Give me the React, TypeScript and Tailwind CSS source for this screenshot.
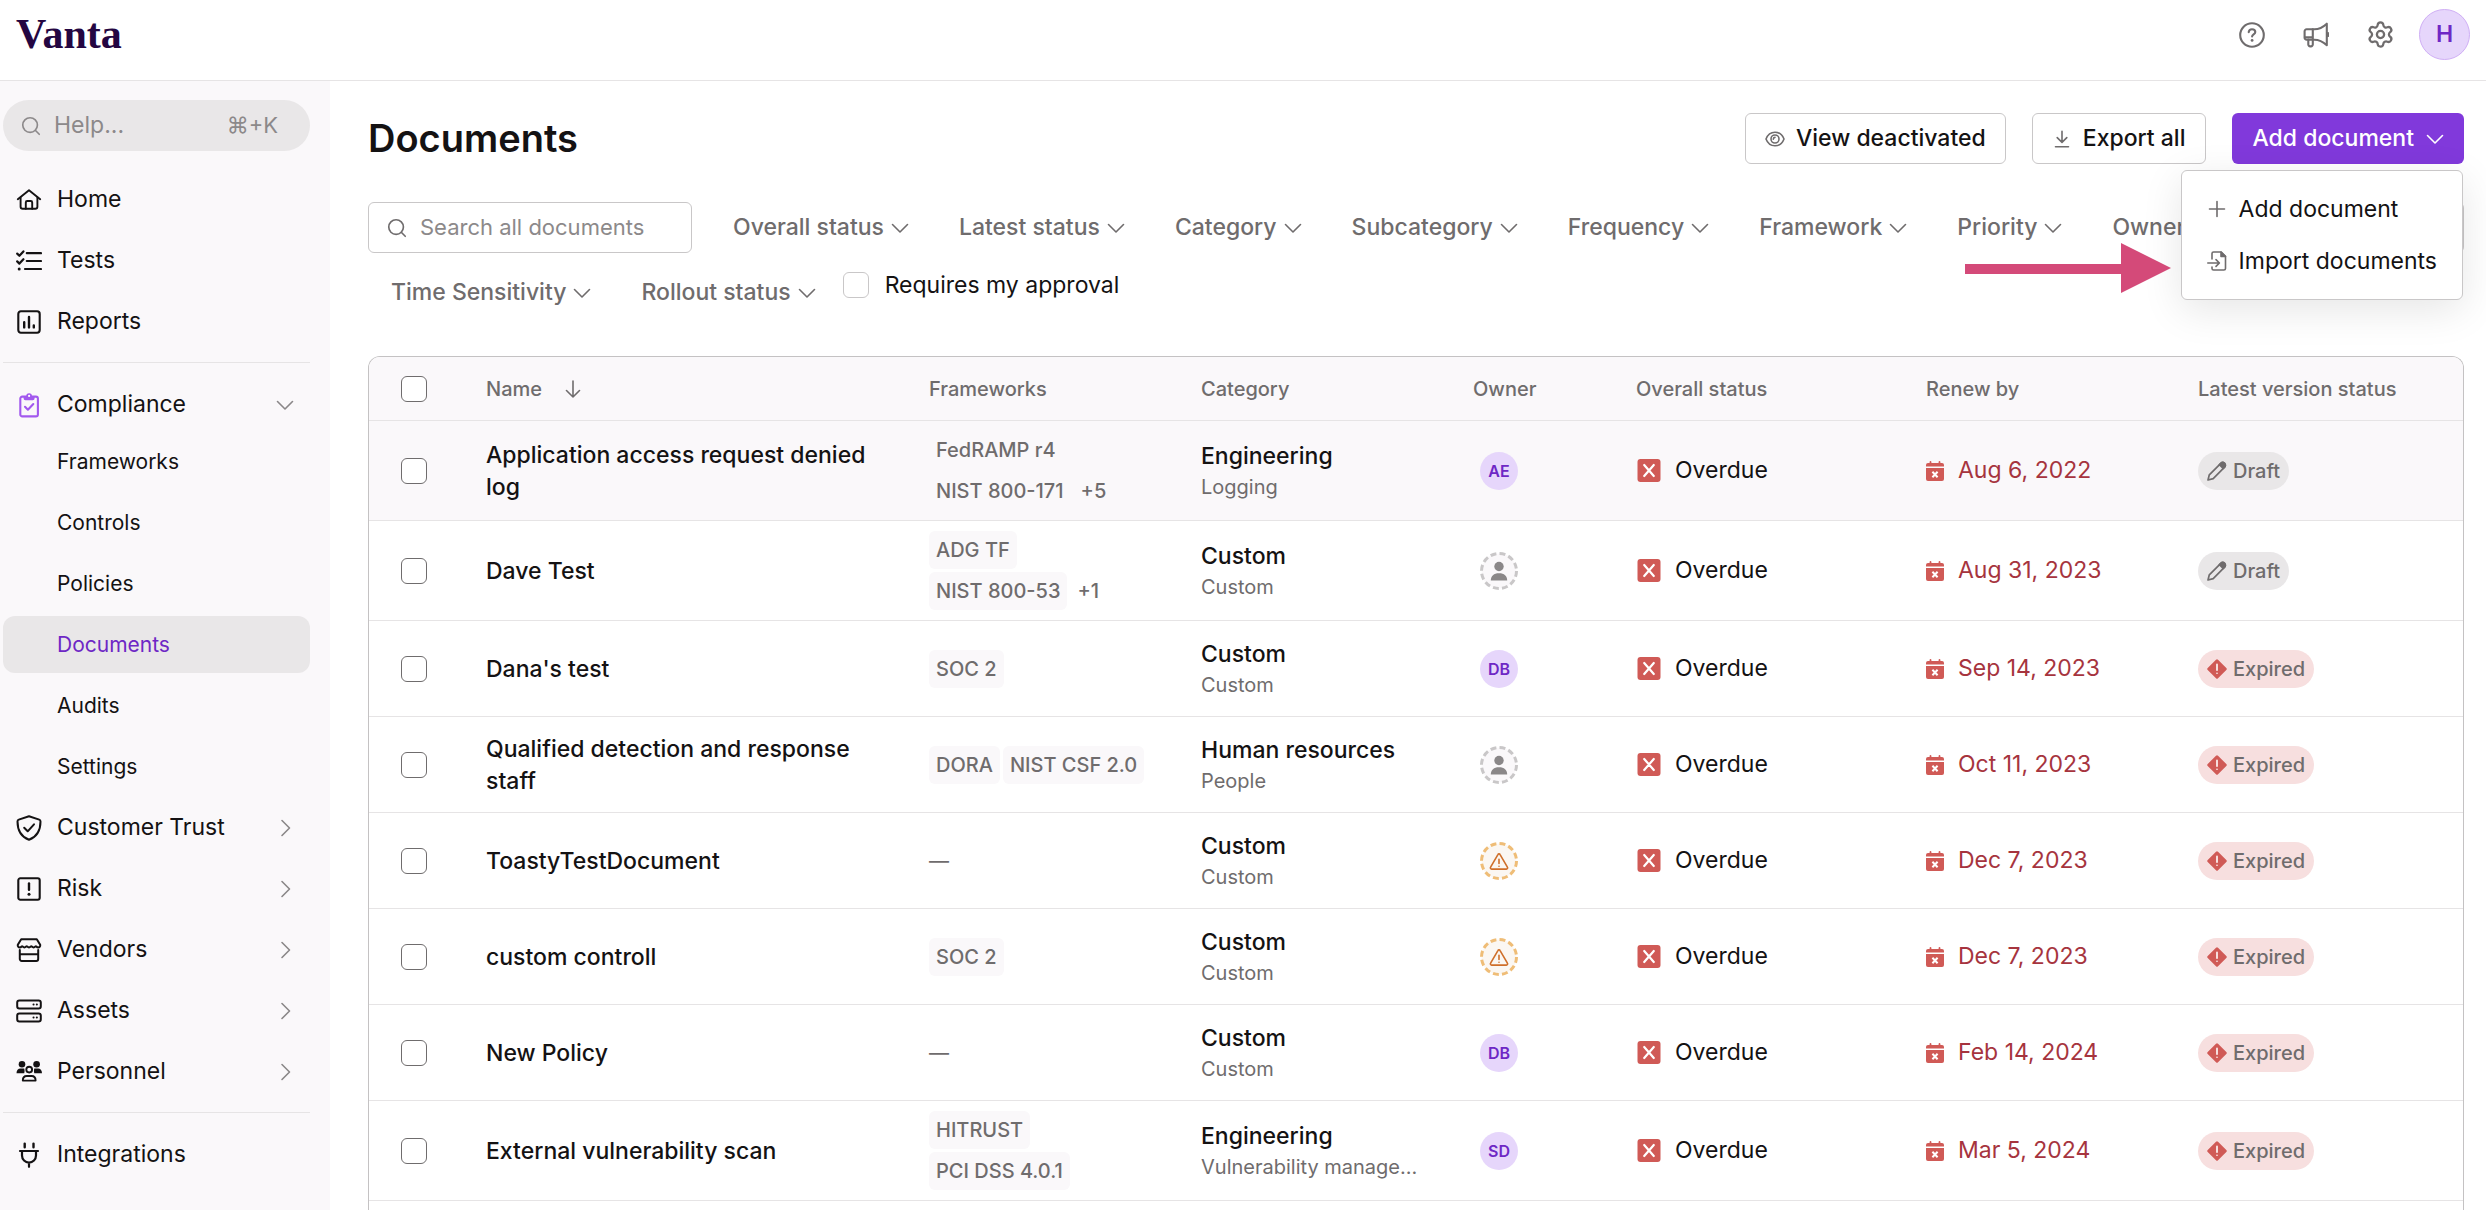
import type { ReactNode } from "react";
import { Search, Settings } from "lucide-react";

type IconProps = {
  size?: number;
  box?: number;
  stroke?: number;
  className?: string;
  children: ReactNode;
};

function Icon({ size = 26, box = 26, stroke = 2, className = "", children }: IconProps) {
  return (
    <svg
      width={size}
      height={size}
      viewBox={`0 0 ${box} ${box}`}
      fill="none"
      stroke="currentColor"
      strokeWidth={stroke}
      strokeLinecap="round"
      strokeLinejoin="round"
      className={["shrink-0", className].join(" ")}
      aria-hidden="true"
    >
      {children}
    </svg>
  );
}

function ChevronDown({ className = "" }: { className?: string }) {
  return (
    <Icon size={18} box={18} stroke={1.6} className={className}>
      <path d="m1.5 5.5 7.5 7.5 7.5-7.5" />
    </Icon>
  );
}

function ChevronRight({ className = "" }: { className?: string }) {
  return (
    <Icon size={18} box={18} stroke={1.6} className={className}>
      <path d="m6 1.5 7.5 7.5L6 16.5" />
    </Icon>
  );
}

const navIcons = {
  home: (
    <Icon stroke={1.9}>
      <path d="M1.8 12.2 13 3.2l11.2 9" />
      <path d="M4.6 10.5v9.2a2.1 2.1 0 0 0 2.1 2.1h12.6a2.1 2.1 0 0 0 2.1-2.1v-9.2" />
      <path d="M9.8 21.8v-6.4a1.4 1.4 0 0 1 1.4-1.4h3.6a1.4 1.4 0 0 1 1.4 1.4v6.4" />
    </Icon>
  ),
  tests: (
    <Icon stroke={2.2}>
      <path d="M10.8 5.2H25M10.8 13H25M9 21h16" />
      <path d="m1.2 5.6 2.2 2.2 4-4.4M1.2 13.4l2.2 2.2 4-4.4" />
      <circle cx="3.2" cy="21" r="1.5" fill="currentColor" stroke="none" />
    </Icon>
  ),
  reports: (
    <Icon stroke={2.1}>
      <rect x="2.3" y="2.3" width="21.4" height="21.4" rx="2.6" />
      <path d="M8.2 13.2v5.2M13 8v10.4M17.8 16.4v2" strokeWidth="2.4" />
    </Icon>
  ),
  compliance: (
    <Icon stroke={2.1} className="text-[#a259ee]">
      <rect x="4.3" y="4.6" width="17.6" height="19.8" rx="2" />
      <path d="M7.6 4.2h2.6a2.9 2.9 0 0 1 5.8 0h2.6v2.2a1.8 1.8 0 0 1-1.8 1.8H9.4a1.8 1.8 0 0 1-1.8-1.8z" fill="currentColor" stroke="none" />
      <circle cx="13.1" cy="3.9" r="1.1" fill="white" stroke="none" />
      <path d="m9 14.8 2.9 2.9 5.4-5.6" />
    </Icon>
  ),
  trust: (
    <Icon stroke={2}>
      <path d="M13 1.3 23.2 4.6c.9.3 1.3.9 1.3 1.8 0 8.8-3.9 15.4-11.5 18.4C5.4 21.8 1.5 15.2 1.5 6.4c0-.9.4-1.5 1.3-1.8z" />
      <path d="m8.2 12.8 3.5 3.5 6.3-7" />
    </Icon>
  ),
  risk: (
    <Icon stroke={2.1}>
      <rect x="2.3" y="2.3" width="21.4" height="21.4" rx="2" />
      <path d="M13 7.5v6.2" strokeWidth="2.4" />
      <circle cx="13" cy="18.3" r="1.5" fill="currentColor" stroke="none" />
    </Icon>
  ),
  vendors: (
    <Icon stroke={2}>
      <path d="M5.2 2.2h15.6l3.4 5.6c.3 1.4-.6 2.6-2 2.6-1.5 0-1.9-1.2-2.3-1.2s-1 1.2-2.3 1.2-1.9-1.2-2.3-1.2-1 1.2-2.3 1.2-1.9-1.2-2.3-1.2-1 1.2-2.3 1.2-1.9-1.2-2.3-1.2-.8 1.2-2.3 1.2c-1.4 0-2.3-1.2-2-2.6z" />
      <path d="M3.8 13v9a1.9 1.9 0 0 0 1.9 1.9h14.6a1.9 1.9 0 0 0 1.9-1.9v-9M4 17.3h18" />
    </Icon>
  ),
  assets: (
    <Icon stroke={2}>
      <rect x="1.2" y="2.4" width="23.6" height="8" rx="2.2" />
      <rect x="1.2" y="15.4" width="23.6" height="8" rx="2.2" />
      <path d="M17.5 6.4h.1M20.8 6.4h.1M17.5 19.4h.1M20.8 19.4h.1" />
    </Icon>
  ),
  personnel: (
    <Icon stroke={1.9}>
      <g fill="currentColor" stroke="none">
        <circle cx="6" cy="5.2" r="3.3" />
        <circle cx="20.6" cy="5.2" r="3.3" />
        <path d="M.5 14.2c0-3 1.6-4.7 4-4.7h3.7c.5 1.8.5 3.2 0 4.7zM26 14.2c0-3-1.6-4.7-4-4.7h-3.7c-.5 1.8-.5 3.2 0 4.7z" />
      </g>
      <circle cx="13.2" cy="10.6" r="2.9" />
      <path d="M6.8 21.6c0-2.9 1.5-4.6 4-4.6h4.8c2.5 0 4 1.7 4 4.6z" />
    </Icon>
  ),
  integrations: (
    <Icon stroke={2.2}>
      <path d="M8.7 1.6v3.6M17.5 1.6v3.6" strokeWidth="2.4" />
      <path d="M4 9h18M6 9v4.6a7 7 0 0 0 14 0V9M13 20.8v4" />
    </Icon>
  )
};

type NavItem = {
  label: string;
  icon: keyof typeof navIcons;
  expandable?: boolean;
};

const topItems: NavItem[] = [
  { label: "Home", icon: "home" },
  { label: "Tests", icon: "tests" },
  { label: "Reports", icon: "reports" }
];

const complianceItems = ["Frameworks", "Controls", "Policies", "Documents", "Audits", "Settings"];

const groupItems: NavItem[] = [
  { label: "Customer Trust", icon: "trust", expandable: true },
  { label: "Risk", icon: "risk", expandable: true },
  { label: "Vendors", icon: "vendors", expandable: true },
  { label: "Assets", icon: "assets", expandable: true },
  { label: "Personnel", icon: "personnel", expandable: true }
];

function NavLink({ label, icon, expandable }: NavItem) {
  return (
    <a href="#" className="flex h-[57px] items-center rounded-xl pr-4 pl-[13px] text-[23px]">
      {navIcons[icon]}
      <span className="ml-[15px] flex-1">{label}</span>
      {expandable ? <ChevronRight className="text-[#8a8788]" /> : null}
    </a>
  );
}

function Sidebar() {
  return (
    <aside className="w-[330px] shrink-0 bg-[#faf8fa] pt-[19px] pr-5 pl-[3px]">
      <label className="flex h-[51px] items-center rounded-full bg-[#e9e7e8] pr-8 pl-[17px] text-[#8c898a]">
        <Search size={22} strokeWidth={1.8} className="shrink-0" aria-hidden="true" />
        <input
          type="text"
          aria-label="Help"
          placeholder="Help..."
          className="ml-3 w-full min-w-0 flex-1 bg-transparent text-[23px] outline-none placeholder:text-[#8c898a]"
        />
        <span className="text-[22px]">⌘+K</span>
      </label>

      <nav className="mt-5">
        <div className="flex flex-col gap-1">
          {topItems.map((item) => (
            <NavLink key={item.label} {...item} />
          ))}
        </div>

        <hr className="mt-3 mb-[13px] border-[#e6e4e5]" />

        <a href="#" className="flex h-[57px] items-center rounded-xl pr-4 pl-[13px] text-[23px]">
          {navIcons.compliance}
          <span className="ml-[15px] flex-1">Compliance</span>
          <ChevronDown className="text-[#8a8788]" />
        </a>
        <div className="flex flex-col gap-1">
          {complianceItems.map((label) => (
            <a
              key={label}
              href="#"
              aria-current={label === "Documents" ? "page" : undefined}
              className={[
                "flex h-[57px] items-center rounded-xl pl-[54px] text-[21px]",
                label === "Documents" ? "bg-[#e9e7e8] text-[#6e27c5]" : ""
              ].join(" ")}
            >
              {label}
            </a>
          ))}
          {groupItems.map((item) => (
            <NavLink key={item.label} {...item} />
          ))}
        </div>

        <hr className="mt-3 mb-[13px] border-[#e6e4e5]" />

        <NavLink label="Integrations" icon="integrations" />
      </nav>
    </aside>
  );
}

function TopBar() {
  return (
    <header className="flex h-[81px] shrink-0 items-start justify-between border-b border-[#e6e4e5] pr-4 pl-4">
      <a
        href="#"
        className="mt-3 font-['Liberation_Serif',serif] text-[42px] leading-[44px] font-bold text-[#240642]"
      >
        Vanta
      </a>
      <div className="mt-[9px] flex h-[51px] items-center text-[#6f6c6d]">
        <button type="button" aria-label="Help">
          <Icon stroke={2.1}>
            <circle cx="13" cy="13" r="11.8" />
            <path d="M9.7 10.2c.2-1.8 1.5-2.9 3.3-2.9 1.9 0 3.3 1.1 3.3 2.8 0 2.3-3.2 2.3-3.2 4.3" />
            <circle cx="13.1" cy="18.4" r="1.4" fill="currentColor" stroke="none" />
          </Icon>
        </button>
        <button type="button" aria-label="Announcements" className="ml-[38px]">
          <Icon stroke={2.1}>
            <path d="M3.6 7.3h7.7c4.6 0 9-2.3 12.5-5.6v21.6c-3.5-3.3-7.9-5.6-12.5-5.6H3.6a2 2 0 0 1-2-2V9.3a2 2 0 0 1 2-2z" />
            <path d="M9.8 7.3v15.3a1.8 1.8 0 0 1-1.8 1.8h-.9a1.8 1.8 0 0 1-1.8-1.8v-4.9M2 15.4h7.8" />
            <path d="M25 11v3" />
          </Icon>
        </button>
        <button type="button" aria-label="Settings" className="mr-6 ml-[37px]">
          <Settings size={29} strokeWidth={1.9} />
        </button>
        <button
          type="button"
          aria-label="Account"
          className="flex h-[51px] w-[51px] items-center justify-center rounded-full border border-[#cfaef5] bg-[#e6d6fb] text-[23px] font-semibold text-[#6e27c5]"
        >
          H
        </button>
      </div>
    </header>
  );
}

function AddDocumentMenu() {
  return (
    <div className="relative">
      <button
        type="button"
        aria-haspopup="menu"
        aria-expanded="true"
        className="flex h-[51px] items-center gap-3 rounded-md bg-[#8139db] px-5 text-[23px] font-medium text-white"
      >
        Add document
        <ChevronDown />
      </button>

      <div
        role="menu"
        className="absolute top-full right-px z-10 mt-1.5 rounded-md border border-[#c9c7c8] bg-white py-3 shadow-[0_10px_40px_rgba(0,0,0,0.10)]"
      >
        <button
          type="button"
          role="menuitem"
          className="flex h-[52px] w-full items-center gap-3 px-[25px] text-[23px] whitespace-nowrap"
        >
          <Icon size={20} box={20} stroke={1.6} className="text-[#6f6c6d]">
            <path d="M10 2.5v15M2.5 10h15" />
          </Icon>
          Add document
        </button>
        <button
          type="button"
          role="menuitem"
          className="flex h-[52px] w-full items-center gap-3 px-[25px] text-[23px] whitespace-nowrap"
        >
          <Icon size={20} box={20} stroke={1.6} className="text-[#6f6c6d]">
            <path d="M5 8V2.6A1.6 1.6 0 0 1 6.6 1h7.6l4.3 4.3v12.1a1.6 1.6 0 0 1-1.6 1.6H6.6A1.6 1.6 0 0 1 5 17.4V16" />
            <path d="M14 1v4.5h4.5z" fill="currentColor" />
            <path d="M.8 12h11.4M9 8.6l3.4 3.4L9 15.4" />
          </Icon>
          Import documents
        </button>

        <svg
          width="206"
          height="50"
          viewBox="0 0 206 50"
          className="absolute top-[72px] right-full mr-[11px] max-w-none fill-[#d44a79]"
          aria-hidden="true"
        >
          <path d="M0 21h156V0l50 25-50 25V31H0z" />
        </svg>
      </div>
    </div>
  );
}

function PageHeader() {
  return (
    <div className="flex items-center justify-between">
      <h1 className="text-[38px] leading-[51px] font-semibold">Documents</h1>
      <div className="flex gap-[26px]">
        <button
          type="button"
          className="flex h-[51px] items-center gap-[11px] rounded-md border border-[#c9c7c8] bg-white px-[19px] text-[23px] font-medium"
        >
          <Icon size={20} box={20} stroke={1.6} className="text-[#6f6c6d]">
            <path d="M1 10c1.6-4.2 5-6.8 9-6.8s7.4 2.6 9 6.8c-1.6 4.2-5 6.8-9 6.8S2.6 14.2 1 10z" />
            <circle cx="10" cy="10" r="4" />
            <path d="M8.3 10.2A1.8 1.8 0 0 1 10 8.4" />
          </Icon>
          View deactivated
        </button>
        <button
          type="button"
          className="flex h-[51px] items-center gap-3 rounded-md border border-[#c9c7c8] bg-white px-5 text-[23px] font-medium"
        >
          <Icon size={18} box={18} stroke={1.6} className="text-[#6f6c6d]">
            <path d="M9 1.2v11M4.2 7.6 9 12.4l4.8-4.8M2.5 16.8h13" />
          </Icon>
          Export all
        </button>
        <AddDocumentMenu />
      </div>
    </div>
  );
}

const filters = [
  "Overall status",
  "Latest status",
  "Category",
  "Subcategory",
  "Frequency",
  "Framework",
  "Priority",
  "Owner",
  "Time Sensitivity",
  "Rollout status"
];

function FilterBar() {
  return (
    <div className="mt-[38px] flex items-start">
      <div className="flex flex-1 flex-wrap items-start gap-x-1 gap-y-3.5">
        <label className="mr-3.5 flex h-[51px] w-[324px] items-center rounded-md border border-[#c9c7c8] px-[17px]">
          <Search size={22} strokeWidth={1.8} className="shrink-0 text-[#6f6c6d]" aria-hidden="true" />
          <input
            type="text"
            aria-label="Search all documents"
            placeholder="Search all documents"
            className="ml-3 w-full min-w-0 text-[22px] outline-none placeholder:text-[#8c898a]"
          />
        </label>
        {filters.map((label) => (
          <button
            key={label}
            type="button"
            aria-haspopup="listbox"
            className="flex h-[51px] items-center gap-[7px] px-[23px] text-[23px] font-medium text-[#6f6c6d]"
          >
            {label}
            <ChevronDown />
          </button>
        ))}
        <label className="flex h-9 items-center gap-4 text-[23px]">
          <input
            type="checkbox"
            className="h-[26px] w-[26px] appearance-none rounded-md border border-[#c9c7c8] bg-white"
          />
          Requires my approval
        </label>
      </div>
      <button
        type="button"
        aria-label="Table settings"
        className="flex h-[51px] w-[51px] items-center justify-center rounded-md border border-[#c9c7c8] text-[#6f6c6d]"
      >
        <Settings size={22} strokeWidth={1.6} />
      </button>
    </div>
  );
}

type DocumentRow = {
  name: string;
  frameworks: string[];
  more?: number;
  category: string;
  subcategory: string;
  owner: string;
  renewBy: string;
  version: "Draft" | "Expired";
};

const rows: DocumentRow[] = [
  { name: "Application access request denied log", frameworks: ["FedRAMP r4", "NIST 800-171"], more: 5, category: "Engineering", subcategory: "Logging", owner: "AE", renewBy: "Aug 6, 2022", version: "Draft" },
  { name: "Dave Test", frameworks: ["ADG TF", "NIST 800-53"], more: 1, category: "Custom", subcategory: "Custom", owner: "none", renewBy: "Aug 31, 2023", version: "Draft" },
  { name: "Dana's test", frameworks: ["SOC 2"], category: "Custom", subcategory: "Custom", owner: "DB", renewBy: "Sep 14, 2023", version: "Expired" },
  { name: "Qualified detection and response staff", frameworks: ["DORA", "NIST CSF 2.0"], category: "Human resources", subcategory: "People", owner: "none", renewBy: "Oct 11, 2023", version: "Expired" },
  { name: "ToastyTestDocument", frameworks: [], category: "Custom", subcategory: "Custom", owner: "warning", renewBy: "Dec 7, 2023", version: "Expired" },
  { name: "custom controll", frameworks: ["SOC 2"], category: "Custom", subcategory: "Custom", owner: "warning", renewBy: "Dec 7, 2023", version: "Expired" },
  { name: "New Policy", frameworks: [], category: "Custom", subcategory: "Custom", owner: "DB", renewBy: "Feb 14, 2024", version: "Expired" },
  { name: "External vulnerability scan", frameworks: ["HITRUST", "PCI DSS 4.0.1"], category: "Engineering", subcategory: "Vulnerability manage...", owner: "SD", renewBy: "Mar 5, 2024", version: "Expired" }
];

function OwnerAvatar({ owner }: { owner: string }) {
  if (owner === "none") {
    return (
      <svg width="38" height="38" viewBox="0 0 38 38" className="ml-[7px]" role="img" aria-label="No owner">
        <circle cx="19" cy="19" r="17.5" fill="#faf8fa" stroke="#c9c7c8" strokeWidth="3" strokeDasharray="5.9 3.264" />
        <circle cx="19" cy="14.5" r="4.7" fill="#8a8788" />
        <path d="M10.8 28.6c0-4.8 3-7.4 8.2-7.4s8.2 2.6 8.2 7.4z" fill="#8a8788" />
      </svg>
    );
  }

  if (owner === "warning") {
    return (
      <svg width="38" height="38" viewBox="0 0 38 38" className="ml-[7px]" role="img" aria-label="Owner needs attention">
        <circle cx="19" cy="19" r="17.5" fill="#fbf7f2" stroke="#efbd77" strokeWidth="3" strokeDasharray="5.9 3.264" />
        <g fill="none" stroke="#cf6f2a" strokeWidth="1.6" strokeLinejoin="round" strokeLinecap="round">
          <path d="M17.9 12.6a1.2 1.2 0 0 1 2.2 0l7.3 12.6a1.2 1.2 0 0 1-1 1.9H11.6a1.2 1.2 0 0 1-1-1.9z" />
          <path d="M19 17.3v4.2M19 24.2v.1" />
        </g>
      </svg>
    );
  }

  return (
    <span className="ml-[7px] flex h-[38px] w-[38px] items-center justify-center rounded-full bg-[#e6d6fb] text-[16px] font-semibold text-[#6e27c5]">
      {owner}
    </span>
  );
}

function VersionBadge({ version }: { version: DocumentRow["version"] }) {
  const isDraft = version === "Draft";

  return (
    <span
      className={[
        "inline-flex h-[38px] items-center gap-1.5 rounded-full px-[9px] align-middle text-[20px] font-medium text-[#6f6c6d]",
        isDraft ? "bg-[#e9e7e8]" : "bg-[#f7dfdf]"
      ].join(" ")}
    >
      {isDraft ? (
        <Icon size={20} box={20} stroke={1.7}>
          <path d="M1 19l1.3-5.2L13.8 2.3a2.6 2.6 0 0 1 3.8 3.8L6.2 17.6z" />
          <path d="M12.4 3.7l1.4-1.4a2.6 2.6 0 0 1 3.8 3.8l-1.4 1.4z" fill="currentColor" />
        </Icon>
      ) : (
        <svg width="20" height="20" viewBox="0 0 20 20" className="shrink-0" aria-hidden="true">
          <path d="M9 .7a1.4 1.4 0 0 1 2 0L19.3 9a1.4 1.4 0 0 1 0 2L11 19.3a1.4 1.4 0 0 1-2 0L.7 11a1.4 1.4 0 0 1 0-2z" fill="#d05a56" />
          <path d="M10 5.4v5.8M10 14.2v.1" stroke="white" strokeWidth="1.6" strokeLinecap="round" />
        </svg>
      )}
      {version}
    </span>
  );
}

function DocumentTableRow({ row, highlighted }: { row: DocumentRow; highlighted: boolean }) {
  return (
    <tr
      className={[
        "[&>td]:h-24 [&>td]:border-b [&>td]:border-[#e6e4e5] [&>td]:pl-3",
        highlighted ? "bg-[#faf8fa]" : "bg-white"
      ].join(" ")}
    >
      <td>
        <input
          type="checkbox"
          aria-label={`Select ${row.name}`}
          className="ml-5 block h-[26px] w-[26px] appearance-none rounded-md border border-[#6f6c6d] bg-white"
        />
      </td>
      <td className="pr-8 text-[23px] leading-8 font-medium">{row.name}</td>
      <td className="py-2.5 text-[#6f6c6d]">
        {row.frameworks.length > 0 ? (
          <div className="flex max-w-[218px] flex-wrap gap-[3px] text-[20px] font-medium">
            {row.frameworks.map((framework) => (
              <span key={framework} className="flex h-[38px] items-center rounded-md bg-[#faf8fa] px-[7px]">
                {framework}
              </span>
            ))}
            {row.more ? <span className="flex h-[38px] items-center px-[7px]">+{row.more}</span> : null}
          </div>
        ) : (
          <span className="text-[20px]">—</span>
        )}
      </td>
      <td>
        <p className="text-[23px] leading-8 font-medium">{row.category}</p>
        <p className="text-[20px] leading-[30px] whitespace-nowrap text-[#6f6c6d]">{row.subcategory}</p>
      </td>
      <td>
        <OwnerAvatar owner={row.owner} />
      </td>
      <td>
        <div className="flex items-center gap-3.5 text-[23px]">
          <svg width="25" height="25" viewBox="0 0 25 25" aria-hidden="true">
            <rect x="1.5" y="1" width="23" height="23" rx="3" fill="#d05a56" />
            <path d="M8.2 7l9.6 11M17.8 7 8.2 18" stroke="white" strokeWidth="2.2" strokeLinecap="round" />
          </svg>
          Overdue
        </div>
      </td>
      <td>
        <div className="flex items-center gap-3.5 text-[23px] text-[#a6343e]">
          <svg width="18" height="20" viewBox="0 0 18 20" fill="#d05a56" aria-hidden="true">
            <path d="M3.6 2V.9a.9.9 0 0 1 1.8 0V2h7.2V.9a.9.9 0 0 1 1.8 0V2H16a2 2 0 0 1 2 2v1.6H0V4a2 2 0 0 1 2-2z" />
            <path d="M0 7h18v11a2 2 0 0 1-2 2H2a2 2 0 0 1-2-2z" />
            <path d="M6.4 10.8l5.2 5.4M11.6 10.8l-5.2 5.4" stroke="white" strokeWidth="2" />
          </svg>
          {row.renewBy}
        </div>
      </td>
      <td>
        <VersionBadge version={row.version} />
      </td>
    </tr>
  );
}

function DocumentsTable() {
  return (
    <div className="mt-[38px] flex-1 overflow-hidden rounded-t-xl border border-b-0 border-[#c4c2c3]">
      <table className="w-full table-fixed border-separate border-spacing-0 text-left">
        <colgroup>
          <col className="w-[105px]" />
          <col />
          <col className="w-[272px]" />
          <col className="w-[272px]" />
          <col className="w-[163px]" />
          <col className="w-[290px]" />
          <col className="w-[272px]" />
          <col className="w-[277px]" />
        </colgroup>
        <thead>
          <tr className="bg-[#faf8fa] text-[20px] text-[#6f6c6d] [&>th]:h-16 [&>th]:border-b [&>th]:border-[#e6e4e5] [&>th]:pl-3 [&>th]:font-medium">
            <th>
              <input
                type="checkbox"
                aria-label="Select all documents"
                className="ml-5 block h-[26px] w-[26px] appearance-none rounded-md border border-[#6f6c6d] bg-white"
              />
            </th>
            <th aria-sort="descending">
              <span className="flex items-center gap-[22px]">
                Name
                <Icon size={18} box={18} stroke={1.6}>
                  <path d="M9 1v16M2.5 10.5 9 17l6.500-6.500" />
                </Icon>
              </span>
            </th>
            <th>Frameworks</th>
            <th>Category</th>
            <th>Owner</th>
            <th>Overall status</th>
            <th>Renew by</th>
            <th>Latest version status</th>
          </tr>
        </thead>
        <tbody>
          {rows.map((row, index) => (
            <DocumentTableRow key={row.name} row={row} highlighted={index === 0} />
          ))}
        </tbody>
      </table>
    </div>
  );
}

export default function App() {
  return (
    <div className="flex min-h-screen flex-col bg-white font-[Inter,sans-serif] text-[#141213]">
      <TopBar />
      <div className="flex flex-1">
        <Sidebar />
        <main className="flex min-w-0 flex-1 flex-col pt-8 pr-[22px] pl-[38px]">
          <PageHeader />
          <FilterBar />
          <DocumentsTable />
        </main>
      </div>
    </div>
  );
}
